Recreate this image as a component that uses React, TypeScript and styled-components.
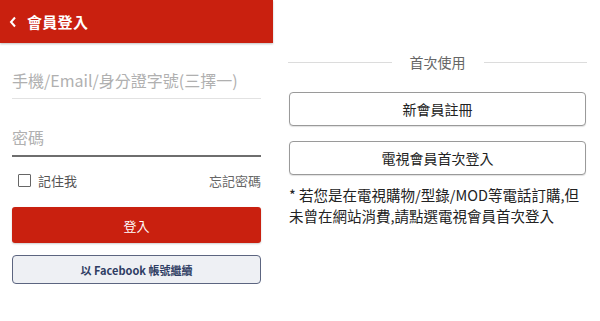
import React from 'react';
import styled, { createGlobalStyle } from 'styled-components';

const GlobalStyle = createGlobalStyle`
    html, body {
        margin: 0;
        padding: 0;
        background: #ffffff;
    }
    body {
        font-family: "Noto Sans CJK TC", "Noto Sans", Roboto, sans-serif;
        -webkit-font-smoothing: antialiased;
    }
`;

const Page = styled.div`
    display: flex;
    width: 600px;
    height: 321px;
    overflow: hidden;
`;

const LoginPanel = styled.section`
    width: 273px;
    display: flex;
    flex-direction: column;
`;

const Header = styled.header`
    height: 43px;
    background: #c9200f;
    display: flex;
    align-items: center;
    padding-left: 9px;
    gap: 10px;
    color: #ffffff;
    box-shadow: 0 1px 2px rgba(0, 0, 0, 0.25);
`;

const Title = styled.h1`
    margin: 0;
    font-size: 15px;
    font-weight: 700;
    letter-spacing: 0.3px;
`;

const Form = styled.div`
    display: flex;
    flex-direction: column;
    padding: 19px 12px 0 12px;
`;

const Field = styled.input<{ $active?: boolean }>`
    height: 36px;
    border: none;
    border-bottom: ${(p) => (p.$active ? '2px solid #6e6e6e' : '1px solid #e2e2e2')};
    padding: 0;
    margin-bottom: ${(p) => (p.$active ? '11px' : '20px')};
    font-family: inherit;
    font-size: 16px;
    color: #333;
    outline: none;
    background: transparent;

    &::placeholder {
        color: #b0b0b0;
    }
`;

const OptionsRow = styled.div`
    display: flex;
    align-items: center;
    justify-content: space-between;
    height: 24px;
    padding-left: 6px;
    margin-bottom: 15px;
`;

const Remember = styled.label`
    display: flex;
    align-items: center;
    gap: 7px;
    font-size: 13px;
    color: #555;
`;

const CheckBox = styled.span`
    width: 11px;
    height: 11px;
    border: 1.5px solid #666;
    border-radius: 1px;
`;

const Forgot = styled.a`
    font-size: 13px;
    color: #666;
    text-decoration: none;
`;

const SubmitButton = styled.button`
    height: 36px;
    border: none;
    border-radius: 3px;
    background: #c9200f;
    color: #ffffff;
    font-family: inherit;
    font-size: 13px;
    box-shadow: 0 1px 2px rgba(0, 0, 0, 0.2);
    margin-bottom: 12px;
`;

const FacebookButton = styled.button`
    height: 29px;
    border: 1px solid #5c6580;
    border-radius: 4px;
    background: #eef0f4;
    color: #2f3d63;
    font-family: inherit;
    font-size: 11px;
    font-weight: 700;
`;

const FirstUsePanel = styled.section`
    width: 299px;
    margin-left: 15px;
    padding-top: 52px;
    display: flex;
    flex-direction: column;
`;

const Divider = styled.div`
    display: flex;
    align-items: center;
    gap: 18px;
    font-size: 14px;
    color: #666;
    margin-bottom: 20px;

    &::before,
    &::after {
        content: '';
        flex: 1;
        height: 1px;
        background: #dcdcdc;
    }
`;

const OutlineButton = styled.button`
    height: 34px;
    width: 297px;
    margin-left: 1px;
    border: 1px solid #9a9a9a;
    border-radius: 4px;
    background: #ffffff;
    color: #222;
    font-family: inherit;
    font-size: 14px;
    box-shadow: 0 1px 1px rgba(0, 0, 0, 0.12);
    margin-bottom: 15px;
`;

const Note = styled.p`
    margin: -6px 0 0 1px;
    font-size: 14.5px;
    line-height: 21px;
    color: #222;
    white-space: nowrap;
`;

const BackIcon = () => (
    <svg width="8" height="12" viewBox="0 0 8 12">
        <path d="M6 1.5 L2 6 L6 10.5" fill="none" stroke="#fff" strokeWidth="2" />
    </svg>
);

const App: React.FC = () => (
    <Page>
        <GlobalStyle />
        <LoginPanel>
            <Header>
                <BackIcon />
                <Title>會員登入</Title>
            </Header>
            <Form>
                <Field placeholder="手機/Email/身分證字號(三擇一)" />
                <Field $active type="password" placeholder="密碼" />
                <OptionsRow>
                    <Remember>
                        <CheckBox />
                        記住我
                    </Remember>
                    <Forgot>忘記密碼</Forgot>
                </OptionsRow>
                <SubmitButton>登入</SubmitButton>
                <FacebookButton>以 Facebook 帳號繼續</FacebookButton>
            </Form>
        </LoginPanel>
        <FirstUsePanel>
            <Divider>首次使用</Divider>
            <OutlineButton>新會員註冊</OutlineButton>
            <OutlineButton>電視會員首次登入</OutlineButton>
            <Note>
                * 若您是在電視購物/型錄/MOD等電話訂購,但
                <br />
                未曾在網站消費,請點選電視會員首次登入
            </Note>
        </FirstUsePanel>
    </Page>
);

export default App;
